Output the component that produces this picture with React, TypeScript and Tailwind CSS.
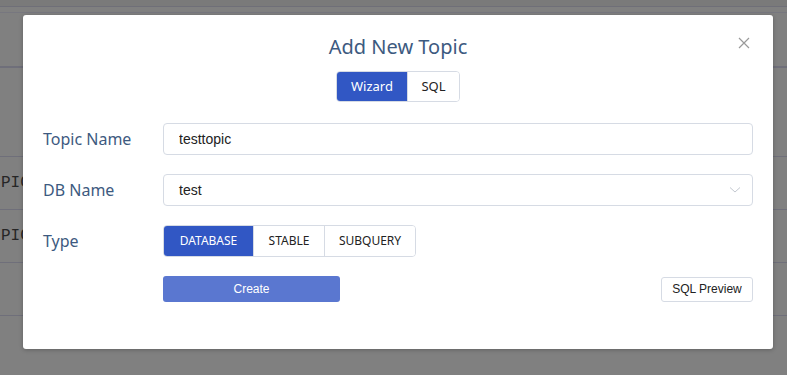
import { useState } from "react";

const label = "w-[120px] shrink-0 text-[16px] text-[#3d5a80] font-['Noto_Sans',sans-serif]";

function BackgroundPage() {
  return (
    <div className="flex flex-col">
      <div className="h-[7px] border-b border-[#6f6f78] bg-[#7a7a7a]" />
      <div className="h-[6px] border-b border-[#77777f]" />
      <div className="h-[55px] border-b-2 border-[#6f6f7a]" />
      <div className="h-[89px] border-b border-[#6f6f7a]" />
      {["PIC", "PIC"].map((t, i) => (
        <div
          key={i}
          className="flex h-[53px] items-center border-b border-[#6f6f7a] pl-[1px] font-['Liberation_Mono',monospace] text-[16px] text-[#262626]"
        >
          {t}
        </div>
      ))}
      <div className="h-[53px] border-b border-[#6f6f7a]" />
    </div>
  );
}

function Segmented({
  items,
  value,
  onChange,
  className,
  itemClass,
}: {
  items: string[];
  value: string;
  onChange: (v: string) => void;
  className?: string;
  itemClass: string;
}) {
  return (
    <div className={"flex overflow-hidden rounded-[4px] border border-[#d6dbe4] " + (className ?? "")}>
      {items.map((it, i) => (
        <button
          key={it}
          onClick={() => onChange(it)}
          className={
            itemClass +
            (i > 0 ? " border-l border-[#d6dbe4]" : "") +
            (value === it ? " bg-[#3157c4] text-white" : " bg-white text-[#222]")
          }
        >
          {it}
        </button>
      ))}
    </div>
  );
}

export default function App() {
  const [mode, setMode] = useState("Wizard");
  const [type, setType] = useState("DATABASE");

  return (
    <div className="relative h-[375px] w-full overflow-hidden bg-[#808080]">
      <BackgroundPage />

      <div className="absolute left-[23px] top-[15px] h-[334px] w-[750px] rounded-[3px] bg-white px-[20px] pt-[18px] shadow-[0_1px_4px_rgba(0,0,0,0.25)]">
        <button className="absolute right-[23px] top-[22px] text-[#9a9a9a]">
          <svg width="12" height="12" viewBox="0 0 12 12" fill="none" stroke="currentColor" strokeWidth="1.2">
            <path d="M1 1L11 11M11 1L1 11" />
          </svg>
        </button>

        <h2 className="text-center font-['Noto_Sans',sans-serif] text-[20px] leading-[28px] text-[#3d5a80]">
          Add New Topic
        </h2>

        <div className="mt-[10px] flex justify-center">
          <Segmented
            items={["Wizard", "SQL"]}
            value={mode}
            onChange={setMode}
            className="h-[31px]"
            itemClass="h-full font-['Noto_Sans',sans-serif] text-[13px] first:w-[70px] last:w-[52px]"
          />
        </div>

        <div className="mt-[21px] flex flex-col gap-[19px]">
          <div className="flex items-center">
            <span className={label}>Topic Name</span>
            <input
              defaultValue="testtopic"
              className="h-[32px] flex-1 rounded-[4px] border border-[#d6dbe4] px-[15px] font-['Liberation_Sans',Arial,sans-serif] text-[14px] text-[#222] outline-none"
            />
          </div>

          <div className="flex items-center">
            <span className={label}>DB Name</span>
            <div className="flex h-[32px] flex-1 items-center justify-between rounded-[4px] border border-[#d6dbe4] pl-[15px] pr-[11px] font-['Liberation_Sans',Arial,sans-serif] text-[14px] text-[#222]">
              <span>test</span>
              <svg width="12" height="8" viewBox="0 0 12 8" fill="none" stroke="#c3c8d0" strokeWidth="1">
                <path d="M1 1.5L6 6L11 1.5" />
              </svg>
            </div>
          </div>

          <div className="flex items-center">
            <span className={label}>Type</span>
            <Segmented
              items={["DATABASE", "STABLE", "SUBQUERY"]}
              value={type}
              onChange={setType}
              className="h-[32px]"
              itemClass="h-full font-['Noto_Sans',sans-serif] text-[12px] px-[12px] [&:nth-child(1)]:w-[89px] [&:nth-child(2)]:w-[71px] [&:nth-child(3)]:w-[91px]"
            />
          </div>

          <div className="-mt-[1px] flex items-center justify-between pl-[120px]">
            <button className="mt-[1px] h-[26px] w-[177px] rounded-[3px] bg-[#5a77d0] font-['Liberation_Sans',Arial,sans-serif] text-[12px] text-white">
              Create
            </button>
            <button className="mt-[1px] h-[25px] w-[92px] rounded-[3px] border border-[#d6dbe4] bg-white font-['Liberation_Sans',Arial,sans-serif] text-[12px] text-[#222]">
              SQL Preview
            </button>
          </div>
        </div>
      </div>
    </div>
  );
}
